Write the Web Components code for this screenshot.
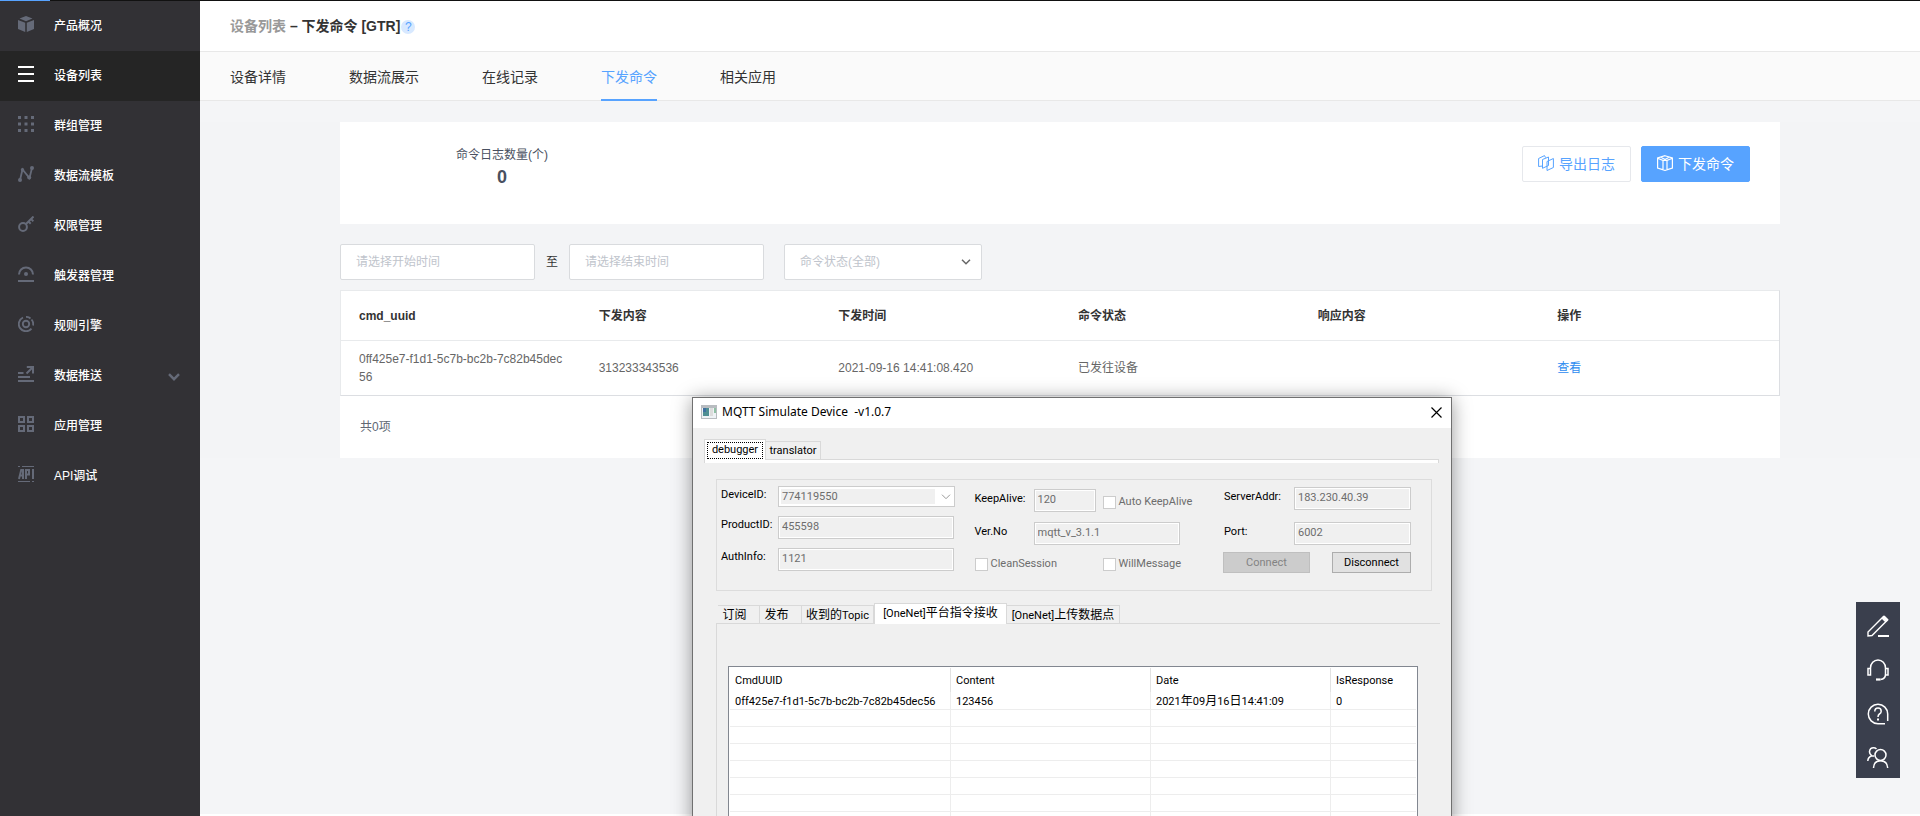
<!DOCTYPE html>
<html lang="zh-CN">
<head>
<meta charset="utf-8">
<title>下发命令</title>
<style>
  html, body { margin: 0; height: 100%; }
  body { font: 12px/18px "Liberation Sans", "Noto Sans CJK SC", sans-serif; color: #333; background: #fff; overflow: hidden; }
</style>
</head>
<body>
<console-app></console-app>

<script>
const ICONS = {
  cube: ['0 0 16 16', '<path fill="currentColor" d="M8 0l6.500 2.600L8 5.200 1.500 2.600zM0 4l7.200 2.800V16L0 13zM16 4L8.800 6.800V16L16 13z"/>'],
  list: ['0 0 16 16', '<path fill="currentColor" d="M0 0h16v2H0zM0 7h16v2H0zM0 14h16v2H0z"/>'],
  dots: ['0 0 16 16', '<path fill="currentColor" d="M0 0h3v3H0zM6.500 0h3v3h-3zM13 0h3v3h-3zM0 6.500h3v3H0zM6.500 6.500h3v3h-3zM13 6.500h3v3h-3zM0 13h3v3H0zM6.500 13h3v3h-3zM13 13h3v3h-3z"/>'],
  flow: ['0 0 16 16', '<path fill="none" stroke="currentColor" stroke-width="1.800" d="M2 14L4.500 3.500 11.500 12 14 2"/><g fill="currentColor"><circle cx="2" cy="14" r="2"/><circle cx="4.500" cy="3.800" r="1.700"/><circle cx="11.200" cy="11.500" r="2"/><circle cx="14" cy="2" r="2"/></g>'],
  key: ['0 0 16 16', '<g fill="none" stroke="currentColor" stroke-width="2"><circle cx="5" cy="11" r="3.900"/><path d="M8 8L15.500 .5M10.500 5.500l2.200 2.200M13 3l2.400 2.200"/></g>'],
  trigger: ['0 0 16 16', '<g fill="none" stroke="currentColor" stroke-width="2"><path d="M1 8.500a7 7 0 0 1 14 0M0 15h16"/></g><circle cx="8" cy="8" r="2" fill="currentColor"/>'],
  rule: ['0 0 16 16', '<g fill="none" stroke="currentColor" stroke-width="1.900"><circle cx="8" cy="8" r="3.200"/><path d="M5 1.500A7.200 7.200 0 1 0 13.500 12.700M8 .9a7.200 7.200 0 0 1 4.500 1.600M13.500 3.500A7.200 7.200 0 0 1 15.100 9.500"/></g>'],
  push: ['0 0 16 16', '<g fill="none" stroke="currentColor" stroke-width="2"><path d="M0 7h5.500M0 11h12M0 15h16M8.500 7.500L15 1M8.800 1H15v6.500"/></g>'],
  apps: ['0 0 16 16', '<path fill="none" stroke="currentColor" stroke-width="2" d="M1 1h5v5H1zM10 1h5v5h-5zM1 10h5v5H1zM10 10h5v5h-5z"/>'],
  api: ['0 0 16 16', '<g fill="none" stroke="currentColor"><path d="M0 .5h2M4 .5h12M0 15.500h12M14 15.500h2"/><path stroke-width="2" d="M1 13L3.200 4h1.800V13M2 9.500h3M8 13V4h3v4.500H8M15 3v10"/></g>'],
  chevron: ['0 0 12 8', '<path fill="none" stroke="currentColor" stroke-width="2.400" d="M1 1.200l5 5 5-5"/>'],
  down: ['0 0 10 6', '<path fill="none" stroke="currentColor" stroke-width="1.500" d="M1 .7l4 4 4-4"/>'],
  thin: ['0 0 10 6', '<path fill="none" stroke="currentColor" d="M1 .7l4 4 4-4"/>'],
  exportlog: ['0 0 16 16', '<g fill="none" stroke="currentColor"><path d="M4.500 11L.6 11.500v-8L6.500.6l1 2M4.500 4.500L10.500 2v8.500l-6 2.800zM9 15.500v-9l6.400-3v9z"/></g>'],
  box: ['0 0 16 16', '<g fill="none" stroke="currentColor" stroke-width="1.200"><path d="M8 .7L15.400 3v10L8 15.400.6 13V3zM.6 3.300L6 5.500v9.200M15.400 3.300L10 5.500v9.200M6 5.500h4M4 2.200L8 4.500l4-2.300"/></g>'],
  close: ['0 0 11 11', '<path fill="none" stroke="currentColor" stroke-width="1.200" d="M.5.5l10 10M10.500.5l-10 10"/>'],
  form: ['0 0 16 14', '<path fill="#b8bcc0" d="M0 0h16v14H0z"/><path fill="#eef2f5" d="M1 3h14v10H1z"/><path fill="#4f8f93" d="M2 3h6v8H2z"/><path fill="#3f6fa0" d="M2 3h3v4H2z"/><path fill="#dcdcdc" d="M9 3h3v8H9z"/><path fill="#8fc0a4" d="M13 3h2v5h-2z"/>'],
  pen: ['0 0 22 22', '<g fill="none" stroke="currentColor" stroke-width="1.400"><path d="M1 21v-4L16.500 1.500l4 3.500L5 20.500zM15 3l4 4"/><path stroke-width="2" d="M11 21h11"/></g><path fill="currentColor" d="M15 2.800L17.500.6l4 4L19.500 7z"/>'],
  headset: ['0 0 22 22', '<g fill="none" stroke="currentColor" stroke-width="1.500"><path d="M3.500 15V9a7.500 8 0 0 1 15 0v6q0 5-5 5.500M1 9.500h2.500V16H1zM18.500 9.500H21V16h-2.500z"/><path stroke-width="2.200" d="M9 20.500h4.500"/></g>'],
  help: ['0 0 22 22', '<g fill="none" stroke="currentColor" stroke-width="1.500"><path d="M18 20.700h-7A9.700 9.700 0 1 1 20.700 11v7"/><path d="M7.800 8.500q0-3.500 3.200-3.500t3.200 3.200q0 1.700-1.800 2.800-1.400.9-1.400 3"/></g><path fill="currentColor" d="M10 15.500h2V17.500h-2z"/>'],
  people: ['0 0 22 22', '<g fill="none" stroke="currentColor" stroke-width="1.500"><circle cx="13.500" cy="8" r="5.500"/><path d="M6.500 21q.3-7.300 7-7.300t7.200 7.300M9.500 2Q8.300.8 6.500.8 3 .8 2.500 4.500q-.2 2.600 2.300 4.300Q1 10 .8 14M4.800 9h2.500"/></g>'],
};

const define = (name, markup, setup) => {
  const template = document.createElement('template');
  template.innerHTML = markup;
  customElements.define(name, class extends HTMLElement {
    connectedCallback() {
      if (this.shadowRoot) return;
      const root = this.attachShadow({ mode: 'open' });
      root.append(template.content.cloneNode(true));
      if (setup) setup(this, root);
    }
  });
};

define('ui-icon', `<style>:host{display:block;flex:none;width:16px;height:16px}svg{display:block;width:100%;height:100%}</style>`,
  (el, root) => {
    const [box, body] = ICONS[el.getAttribute('name')];
    root.innerHTML += `<svg viewBox="${box}" aria-hidden="true">${body}</svg>`;
  });

define('side-item', `
<style>
  :host{display:block;color:#656a78}
  :host([active]){background:#252525;color:#fff}
  a{display:flex;align-items:center;height:50px;padding:0 20px 0 18px;gap:20px;color:inherit;text-decoration:none}
  ui-icon{margin-bottom:4px}
  span{flex:1;color:#fff;font-weight:500}
  .more{width:12px;height:8px;margin:2px 0 0}
</style>
<a href="#"><span><slot></slot></span></a>`,
  (el, root) => {
    const link = root.querySelector('a');
    link.insertAdjacentHTML('afterbegin', `<ui-icon name="${el.getAttribute('icon')}"></ui-icon>`);
    if (el.hasAttribute('expandable')) link.insertAdjacentHTML('beforeend', '<ui-icon class="more" name="chevron"></ui-icon>');
  });

define('side-bar', `
<style>:host{display:block;width:200px;flex:none;background:#323135}</style>
<nav>
  <side-item icon="cube">产品概况</side-item>
  <side-item icon="list" active>设备列表</side-item>
  <side-item icon="dots">群组管理</side-item>
  <side-item icon="flow">数据流模板</side-item>
  <side-item icon="key">权限管理</side-item>
  <side-item icon="trigger">触发器管理</side-item>
  <side-item icon="rule">规则引擎</side-item>
  <side-item icon="push" expandable>数据推送</side-item>
  <side-item icon="apps">应用管理</side-item>
  <side-item icon="api">API调试</side-item>
</nav>`);

define('page-header', `
<style>
  :host{display:flex;align-items:center;height:50px;padding:0 30px;border-bottom:1px solid #e8e8e8;background:#fff;font-size:14px;line-height:20px}
  h1{margin:0;font:inherit;font-weight:700;color:#333}
  h1 a{color:#999;text-decoration:none}
  button{width:14px;height:14px;margin:2px 0 0 1px;padding:0;border:0;border-radius:50%;background:#d8e9ff;color:#57a3ff;font:12px/14px "Liberation Sans",sans-serif}
</style>
<h1><a href="#">设备列表</a> – 下发命令 [GTR]</h1><button aria-label="帮助">?</button>`);

define('tab-nav', `
<style>
  :host{display:block;background:#fafafa;border-bottom:1px solid #e8e8e8;font-size:14px}
  nav{display:flex;gap:63px;padding:0 30px;height:48px}
  a{color:#333;text-decoration:none;line-height:50px;height:47px}
  a.on{color:#57a3ff;border-bottom:2px solid #57a3ff}
</style>
<nav><a href="#">设备详情</a><a href="#">数据流展示</a><a href="#">在线记录</a><a href="#" class="on">下发命令</a><a href="#">相关应用</a></nav>`);

define('action-button', `
<style>
  :host{display:block}
  button{display:flex;align-items:center;justify-content:center;gap:5px;height:36px;width:109px;padding:0;border:1px solid #e6e8ec;border-radius:2px;background:#fff;color:#57a3ff;font:14px/20px "Liberation Sans","Noto Sans CJK SC",sans-serif}
  :host([primary]) button{background:#57a3ff;border-color:#57a3ff;color:#fff}
  ::slotted(ui-icon){margin-bottom:2px}
</style>
<button><slot name="icon"></slot><span><slot></slot></span></button>`);

define('stat-card', `
<style>
  :host{display:flex;justify-content:space-between;align-items:flex-start;box-sizing:border-box;height:102px;padding:24px 30px 0 116px;background:#fff;color:#495060}
  dl{margin:0;text-align:center}
  dt{line-height:18px}
  dd{margin:2px 0 0;font-size:18px;line-height:22px;font-weight:700}
  div{display:flex;gap:10px}
</style>
<dl><dt>命令日志数量(个)</dt><dd>0</dd></dl>
<div>
  <action-button><ui-icon slot="icon" name="exportlog"></ui-icon>导出日志</action-button>
  <action-button primary><ui-icon slot="icon" name="box"></ui-icon>下发命令</action-button>
</div>`);

define('filter-bar', `
<style>
  :host{display:flex;align-items:center;padding:20px 0 10px}
  input,select{box-sizing:border-box;width:195px;height:36px;padding:0 15px;border:1px solid #d9dbde;border-radius:2px;background:#fff;color:#c0c4cc;font:12px/18px "Liberation Sans","Noto Sans CJK SC",sans-serif;appearance:none}
  input::placeholder{color:#c0c4cc}
  span{width:34px;text-align:center}
  div{position:relative;margin-left:20px}
  select{width:198px;display:block}
  ui-icon{position:absolute;right:11px;top:15px;width:10px;height:6px;color:#666;pointer-events:none}
</style>
<input placeholder="请选择开始时间" aria-label="开始时间"><span>至</span><input placeholder="请选择结束时间" aria-label="结束时间">
<div><select aria-label="命令状态"><option>命令状态(全部)</option></select><ui-icon name="down"></ui-icon></div>`);

define('command-table', `
<style>
  :host{display:block;background:#fff}
  table{width:100%;border-collapse:separate;border-spacing:0;table-layout:fixed;border:1px solid #dcdee2;border-top-color:#e8eaec;border-left-color:#e8eaec}
  th,td{padding:0 17px 0 18px;text-align:left;word-break:break-all}
  th{height:49px;border-bottom:1px solid #e8eaec;color:#333}
  td{height:54px;color:#666}
  a{color:#2d8cf0;text-decoration:none}
  footer{padding:22px 20px;color:#606773}
</style>
<table>
  <thead><tr><th>cmd_uuid</th><th>下发内容</th><th>下发时间</th><th>命令状态</th><th>响应内容</th><th>操作</th></tr></thead>
  <tbody><tr><td>0ff425e7-f1d1-5c7b-bc2b-7c82b45dec56</td><td>313233343536</td><td>2021-09-16 14:41:08.420</td><td>已发往设备</td><td></td><td><a href="#">查看</a></td></tr></tbody>
</table>
<footer>共0项</footer>`);

define('connection-form', `
<style>
  :host{display:flex;justify-content:space-between;box-sizing:border-box;width:716px;height:112px;padding:0 20px 0 4px;border:1px solid #dcdcdc}
  .group{display:grid;align-content:start;align-items:start}
  .left{grid-template-columns:57px 177px;row-gap:9px;padding-top:6px}
  .mid{grid-template-columns:59px 69px auto;row-gap:10px;padding-top:9px;width:206px;margin-right:24px}
  .right{grid-template-columns:70px 117px;row-gap:12px;padding-top:7px}
  label{line-height:18px;white-space:nowrap}
  .mid label,.right label{line-height:20px}
  input:not([type]),.combo{box-sizing:border-box;width:100%;height:23px;border:1px solid #ccc;background:#f0f0f0;box-shadow:inset 0 0 0 1px #fff;color:#6d6d6d}
  input:not([type]){padding:0 3px 3px;font:11px/18px Roboto,sans-serif}
  .left input:not([type]){width:176px}
  .combo{display:flex;align-items:center;gap:6px;height:21px;padding:2px;background:#fff}
  .combo select{width:154px;height:15px;padding:0 1px;border:0;background:#f0f0f0;color:#6d6d6d;opacity:1;appearance:none;font:11px/15px Roboto,sans-serif}
  .combo ui-icon{width:10px;height:6px;color:#999}
  .mid .keep{width:62px}
  .mid .version{grid-column:2/4;width:146px}
  .check{display:flex;align-items:center;gap:3px;height:18px;color:#6d6d6d}
  .check input{appearance:none;box-sizing:border-box;width:13px;height:13px;margin:0;border:1px solid #ccc;background:#fff}
  .auto{margin-top:4px}
  .clean{grid-column:1/3}
  .buttons{grid-column:1/3;display:flex;justify-content:space-between;margin:-5px 0 0 -1px}
  button{box-sizing:border-box;width:87px;height:21px;padding:0;border:1px solid #adadad;background:#e1e1e1;color:#000;font:11px/18px Roboto,sans-serif}
  button+button{width:79px}
  button:disabled{border-color:#bfbfbf;background:#ccc;color:#838383}
</style>
<div class="group left">
  <label for="dev">DeviceID:</label><div class="combo"><select id="dev" disabled><option>774119550</option></select><ui-icon name="thin"></ui-icon></div>
  <label for="prod">ProductID:</label><input id="prod" value="455598" disabled>
  <label for="auth">AuthInfo:</label><input id="auth" value="1121" disabled>
</div>
<div class="group mid">
  <label for="keep">KeepAlive:</label><input id="keep" class="keep" value="120" disabled><label class="check auto"><input type="checkbox" disabled>Auto KeepAlive</label>
  <label for="ver">Ver.No</label><input id="ver" class="version" value="mqtt_v_3.1.1" disabled>
  <label class="check clean"><input type="checkbox" disabled>CleanSession</label><label class="check"><input type="checkbox" disabled>WillMessage</label>
</div>
<div class="group right">
  <label for="addr">ServerAddr:</label><input id="addr" value="183.230.40.39" disabled>
  <label for="port">Port:</label><input id="port" value="6002" disabled>
  <div class="buttons"><button disabled>Connect</button><button>Disconnect</button></div>
</div>`);

define('topic-tabs', `
<style>
  :host{display:flex;align-items:flex-end;height:20px}
  button{box-sizing:border-box;height:18px;padding:0;border:1px solid #d9d9d9;border-width:1px 1px 0 0;background:#f0f0f0;color:#000;font:11px/18px Roboto,"Noto Sans CJK SC",sans-serif;white-space:nowrap}
  button:first-child{border-left-width:1px}
  b{font-weight:400;font-size:12px}
  .s{width:42px;padding-right:8px}
  .m{width:72px}
  .on{position:relative;width:133px;height:21px;margin-bottom:-1px;padding-bottom:3px;border-left-width:1px;background:#fff}
  .l{width:113px}
</style>
<button class="s"><b>订阅</b></button><button class="s"><b>发布</b></button><button class="m"><b>收到的</b>Topic</button><button class="on">[OneNet]<b>平台指令接收</b></button><button class="l">[OneNet]<b>上传数据点</b></button>`);

define('log-grid', `
<style>
  :host{display:block;box-sizing:border-box;width:690px;height:240px;padding:1px;border:1px solid #828790;background:#fff;overflow:hidden}
  table{width:100%;border-collapse:separate;border-spacing:0;table-layout:fixed}
  th,td{padding:0 5px;text-align:left;font-weight:400;white-space:nowrap;border-right:1px solid #ededed;box-sizing:border-box}
  th{height:24px;border-right-color:#e2e2e2;padding-top:1px}
  td{height:17px;padding-top:2px;line-height:14px;border-bottom:1px solid #ededed}
  b{font-weight:400;font-size:12px}
  th:last-child,td:last-child{border-right:0}
</style>
<table>
  <colgroup><col style="width:221px"><col style="width:200px"><col style="width:180px"><col></colgroup>
  <thead><tr><th>CmdUUID</th><th>Content</th><th>Date</th><th>IsResponse</th></tr></thead>
  <tbody><tr><td>0ff425e7-f1d1-5c7b-bc2b-7c82b45dec56</td><td>123456</td><td>2021<b>年</b>09<b>月</b>16<b>日</b>14:41:09</td><td>0</td></tr></tbody>
</table>`,
  (el, root) => {
    const body = root.querySelector('tbody');
    for (let i = 0; i < 10; i++) body.insertAdjacentHTML('beforeend', '<tr><td></td><td></td><td></td><td></td></tr>');
  });

define('sim-window', `
<style>
  :host{position:absolute;left:692px;top:397px;box-sizing:border-box;width:760px;height:520px;border:1px solid #707070;background:#f0f0f0;color:#000;font:11px/16px Roboto,"Noto Sans CJK SC",sans-serif;box-shadow:0 2px 18px rgba(0,0,0,.4)}
  header{display:flex;align-items:center;box-sizing:border-box;height:30px;padding:0 9px 2px 8px;gap:5px;background:#fff;font:12px/18px "Noto Sans",sans-serif;white-space:pre}
  header ui-icon{height:14px}
  header button{display:flex;margin-left:auto;padding:0;border:0;background:none;color:#000}
  header button ui-icon{width:11px;height:11px}
  .main{display:flex;align-items:flex-end;height:20px;margin:11px 0 0 11px}
  .main button{box-sizing:border-box;height:18px;width:55px;padding:0;border:1px solid #d9d9d9;border-width:1px 1px 0 0;background:#f0f0f0;font:11px/18px Roboto,sans-serif;color:#000}
  .main .on{position:relative;width:62px;height:21px;margin-bottom:-1px;padding:2px;border-left-width:1px;background:#fff}
  .on span{display:block;height:15px;line-height:13px;border:1px dotted #000}
  .strip{height:3px;margin:0 12px 16px 11px;border:1px solid #d9d9d9;border-bottom:0;background:#fff}
  .panel{width:724px;height:300px;margin-left:23px;border:1px solid #d9d9d9;border-width:1px 0 0 1px;box-sizing:border-box;padding:42px 0 0 11px}
  connection-form{margin-left:23px}
  topic-tabs{margin:12px 0 0 25px}
</style>
<header><ui-icon name="form"></ui-icon><span>MQTT Simulate Device  -v1.0.7</span><button aria-label="Close"><ui-icon name="close"></ui-icon></button></header>
<div class="main"><button class="on"><span>debugger</span></button><button>translator</button></div>
<div class="strip"></div>
<connection-form></connection-form>
<topic-tabs></topic-tabs>
<div class="panel"><log-grid></log-grid></div>`);

define('float-tools', `
<style>
  :host{position:absolute;right:20px;bottom:38px;background:#3a3f4d;color:#fff}
  button{display:flex;align-items:center;justify-content:center;box-sizing:border-box;width:44px;height:44px;padding:4px 0 0;border:0;background:none;color:inherit}
  ui-icon{width:22px;height:22px}
</style>
<button aria-label="反馈"><ui-icon name="pen"></ui-icon></button><button aria-label="客服"><ui-icon name="headset"></ui-icon></button><button aria-label="帮助"><ui-icon name="help"></ui-icon></button><button aria-label="社区"><ui-icon name="people"></ui-icon></button>`);

define('console-app', `
<style>
  :host{position:relative;display:flex;flex-direction:column;min-height:100vh;overflow:hidden}
  .progress{height:1px;background:linear-gradient(90deg,#57a3ff 50px,#111 50px)}
  .body{flex:1;display:flex}
  main{flex:1;min-width:0;background:#f4f5f7;border-bottom:2px solid #fff}
  .content{margin-top:21px;padding:0 140px;background:#f3f4f6}
</style>
<div class="progress"></div>
<div class="body">
  <side-bar></side-bar>
  <main>
    <page-header></page-header>
    <tab-nav></tab-nav>
    <div class="content">
      <stat-card></stat-card>
      <filter-bar></filter-bar>
      <command-table></command-table>
    </div>
  </main>
</div>
<sim-window></sim-window>
<float-tools></float-tools>`);
</script>
</body>
</html>
